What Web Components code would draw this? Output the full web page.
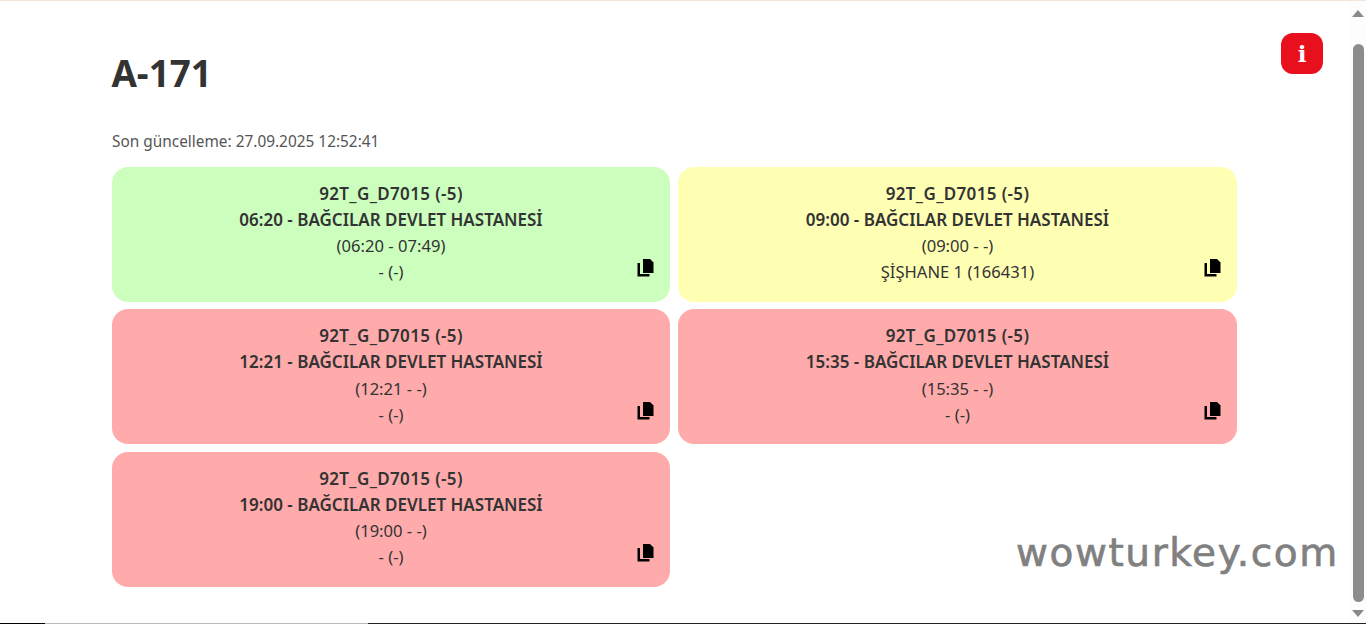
<!DOCTYPE html>
<html lang="tr">
<head>
<meta charset="utf-8">
<title>A-171</title>
<style>
    html, body { margin:0; height:100%; overflow:hidden; background:#fff; }
    body { font-family:"Noto Sans", "Liberation Sans", sans-serif; color:#333; }
</style>
</head>
<body>
<trip-page>
    <trip-card state="green" line="92T_G_D7015 (-5)" title="06:20 - BAĞCILAR DEVLET HASTANESİ" time="(06:20 - 07:49)" driver="- (-)"></trip-card>
    <trip-card state="yellow" line="92T_G_D7015 (-5)" title="09:00 - BAĞCILAR DEVLET HASTANESİ" time="(09:00 - -)" driver="ŞİŞHANE 1 (166431)"></trip-card>
    <trip-card state="red" line="92T_G_D7015 (-5)" title="12:21 - BAĞCILAR DEVLET HASTANESİ" time="(12:21 - -)" driver="- (-)"></trip-card>
    <trip-card state="red" line="92T_G_D7015 (-5)" title="15:35 - BAĞCILAR DEVLET HASTANESİ" time="(15:35 - -)" driver="- (-)"></trip-card>
    <trip-card state="red" line="92T_G_D7015 (-5)" title="19:00 - BAĞCILAR DEVLET HASTANESİ" time="(19:00 - -)" driver="- (-)"></trip-card>
</trip-page>

<script>
const cardTemplate = document.createElement("template");
cardTemplate.innerHTML = `
<style>
    :host { display:block; position:relative; height:135px; box-sizing:border-box; padding-top:14.200px; border-radius:16px; text-align:center; font-size:16.6px; line-height:26.2px; color:#333; }
    :host([state="green"]) { background:#ccffbe; }
    :host([state="yellow"]) { background:#ffffb4; }
    :host([state="red"]) { background:#ffabab; }
    b { display:block; font-size:17px; font-weight:600; }
    #line { letter-spacing:.37px; }
    div { color:#333; }
    svg { position:absolute; right:16px; bottom:24.500px; width:17px; height:18px; }
</style>
<b id="line"></b>
<b id="title"></b>
<div id="time"></div>
<div id="driver"></div>
<svg viewBox="0 0 17 18" aria-hidden="true">
    <path d="M.5 4H3v11h9.500v2.500H.5z" fill="#000"/>
    <path d="M6 0h7l3.500 3.500V14H6z" fill="#000"/>
</svg>
`;

class TripCard extends HTMLElement {
    constructor() {
        super();
        this._shadow = this.attachShadow({ mode: "open" });
        this._shadow.appendChild(cardTemplate.content.cloneNode(true));
    }

    connectedCallback() {
        for (const key of ["line", "title", "time", "driver"]) {
            this._shadow.getElementById(key).textContent = this.getAttribute(key) || "";
        }
    }
}
customElements.define("trip-card", TripCard);

const scrollTemplate = document.createElement("template");
scrollTemplate.innerHTML = `
<style>
    :host { display:flex; flex-direction:column; align-items:center; width:16px; background:#fdfdfd; flex:none; }
    .up, .down { width:0; height:0; border-left:6px solid transparent; border-right:6px solid transparent; flex:none; }
    .up { margin-top:9px; border-bottom:7px solid #8a8a8a; }
    .down { margin-top:8px; margin-bottom:6px; border-top:7px solid #8a8a8a; }
    .thumb { width:11px; flex:1; margin-top:27px; border-radius:6px; background:#8c8c8c; }
</style>
<div class="up"></div>
<div class="thumb"></div>
<div class="down"></div>
`;

class FakeScrollbar extends HTMLElement {
    constructor() {
        super();
        this.attachShadow({ mode: "open" }).appendChild(scrollTemplate.content.cloneNode(true));
    }
}
customElements.define("fake-scrollbar", FakeScrollbar);

const pageTemplate = document.createElement("template");
pageTemplate.innerHTML = `
<style>
    :host { display:flex; flex-direction:column; height:624px; position:relative; }
    .top { height:1px; background:#f5e6d8; flex:none; }
    .bottom { height:1px; flex:none; background:linear-gradient(to right,#000 45px,#bbb 45px,#bbb 368px,#222 368px); }
    .row { flex:1; display:flex; min-height:0; }
    main { flex:1; padding:0 0 0 112px; min-width:0; }
    h1 { margin:0 0 0 -.6px; padding-top:48px; font-size:36.8px; line-height:48px; font-weight:700; color:#333; }
    p { margin:0; padding-top:33px; font-size:15.4px; line-height:24px; color:#555; }
    .grid { display:grid; grid-template-columns:558px 559px; column-gap:8px; row-gap:7.500px; margin-top:12.600px; }
    .info { position:absolute; left:1281px; top:33px; width:42px; height:41px; border-radius:12px; background:#e8101c; color:#fff; display:flex; align-items:center; justify-content:center; font:700 23px "DejaVu Serif", serif; }
    .mark { position:absolute; left:1016px; top:530px; font:400 39px "DejaVu Sans", sans-serif; letter-spacing:1.600px; -webkit-text-stroke:.7px #808080; color:#808080; white-space:nowrap; }
</style>
<div class="top"></div>
<div class="row">
    <main>
        <h1>A-171</h1>
        <p>Son güncelleme: 27.09.2025 12:52:41</p>
        <div class="grid"><slot></slot></div>
    </main>
    <fake-scrollbar></fake-scrollbar>
</div>
<div class="bottom"></div>
<div class="info">i</div>
<div class="mark">wowturkey.com</div>
`;

class TripPage extends HTMLElement {
    constructor() {
        super();
        this.attachShadow({ mode: "open" }).appendChild(pageTemplate.content.cloneNode(true));
    }
}
customElements.define("trip-page", TripPage);
</script>
</body>
</html>
